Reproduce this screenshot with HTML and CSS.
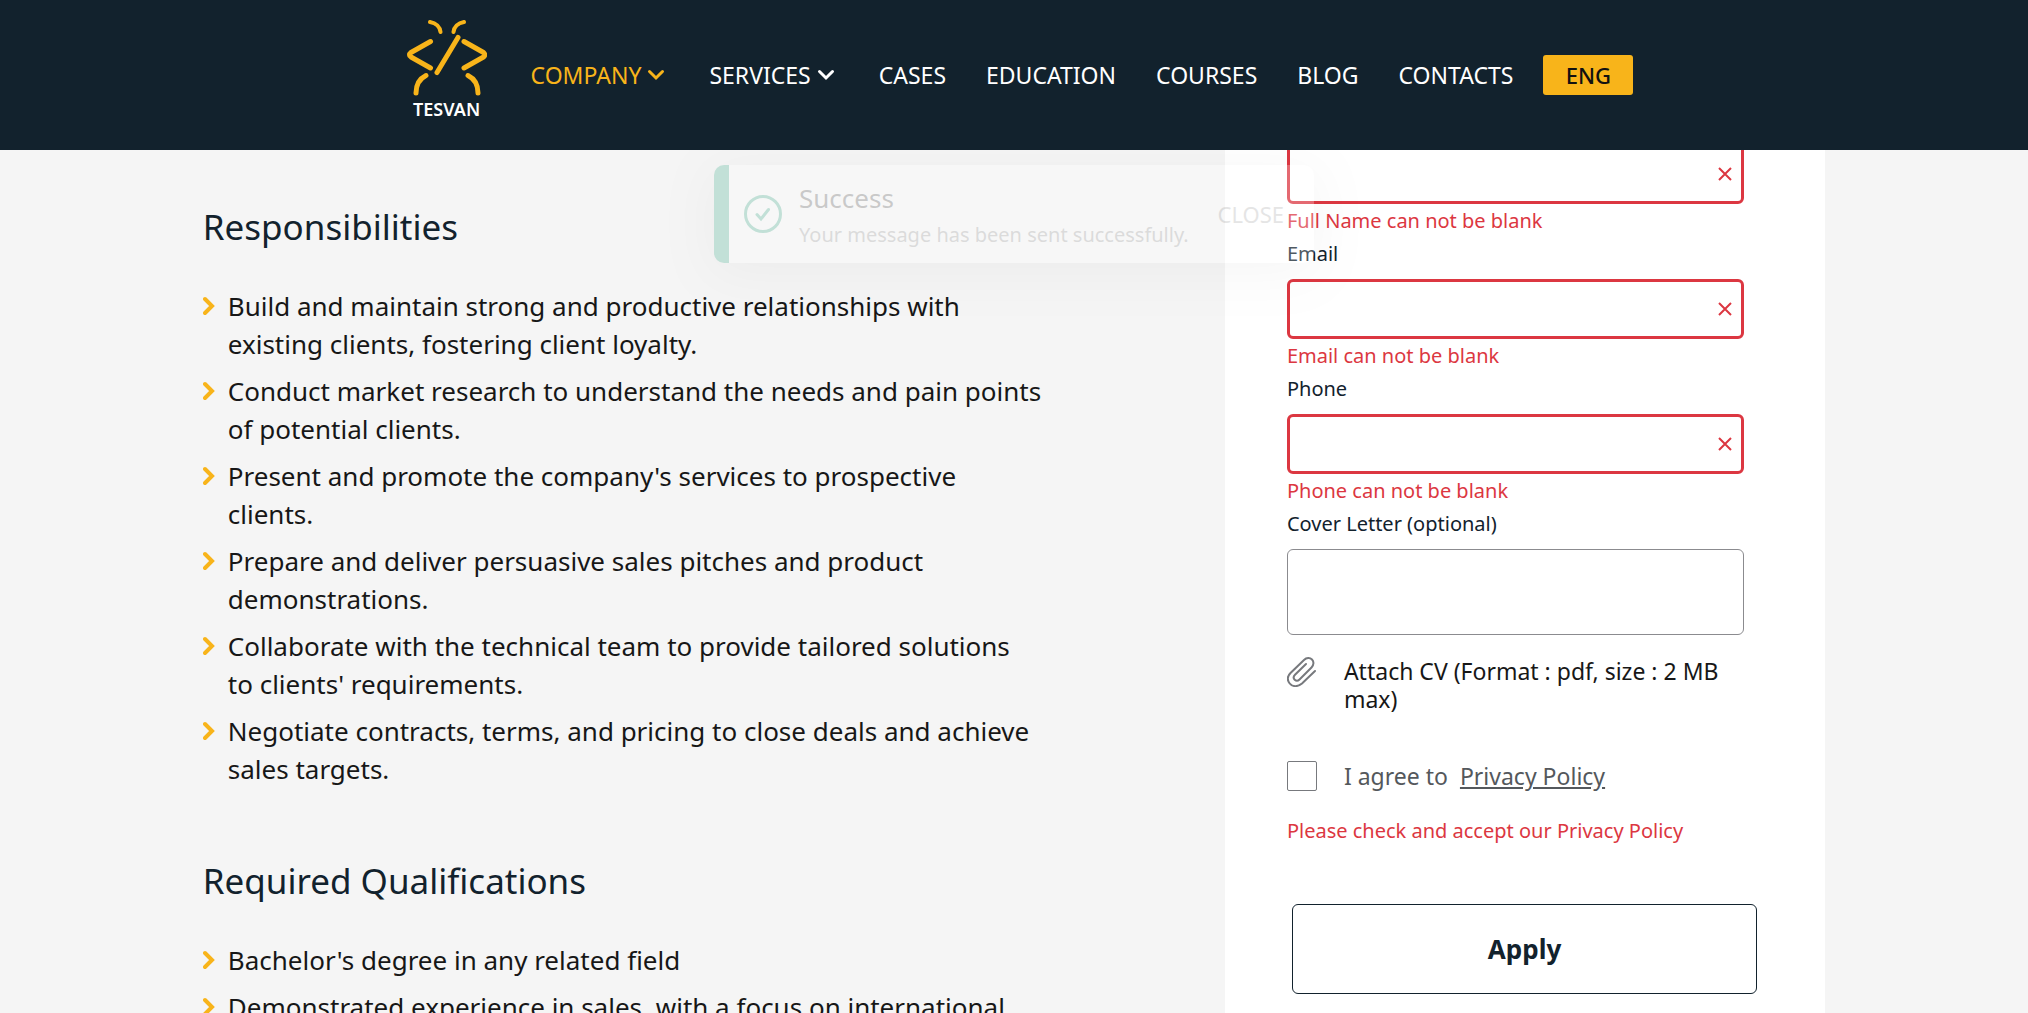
FILE: index.html
```html
<!DOCTYPE html>
<html lang="en">
<head>
<meta charset="utf-8">
<title>Tesvan – Careers</title>
<meta name="viewport" content="width=device-width, initial-scale=1">
<link rel="stylesheet" href="styles.css">
</head>
<body>
<header class="header">
  <a class="logo" href="#" aria-label="Tesvan home">
    <svg class="logo-mark" viewBox="0 0 80 76" fill="none" stroke="#f8b41a" stroke-width="5" stroke-linecap="round" stroke-linejoin="round" aria-hidden="true">
      <path d="M23 2C29 3 33 7 33.500 12M57 2C51 3 47 7 46.500 12" stroke-width="4"/>
      <path d="M23.500 21.500L4 32.500Q1 35 4 37L23.500 48M57 21.500L76.500 32.500Q79 35 76.500 37L57 48M51 17.500L30 52.500M19 55.500C12 59 9 66 9 73M61 55.500C68 59 71 66 71 73"/>
    </svg>
    <span class="logo-name">TESVAN</span>
  </a>
  <nav class="nav">
    <a class="nav-link active" href="#">COMPANY<svg class="chevron" viewBox="0 0 18 12" aria-hidden="true"><path d="M2.500 2.500L9 9L15.500 2.500"/></svg></a>
    <a class="nav-link" href="#">SERVICES<svg class="chevron" viewBox="0 0 18 12" aria-hidden="true"><path d="M2.500 2.500L9 9L15.500 2.500"/></svg></a>
    <a class="nav-link" href="#">CASES</a>
    <a class="nav-link" href="#">EDUCATION</a>
    <a class="nav-link" href="#">COURSES</a>
    <a class="nav-link" href="#">BLOG</a>
    <a class="nav-link" href="#">CONTACTS</a>
  </nav>
  <button class="lang" type="button">ENG</button>
</header>

<main class="main">
  <article class="job">
    <section class="section">
      <h2 class="section-title">Responsibilities</h2>
      <ul class="list">
        <li>Build and maintain strong and productive relationships with existing clients, fostering client loyalty.</li>
        <li>Conduct market research to understand the needs and pain points of potential clients.</li>
        <li>Present and promote the company's services to prospective clients.</li>
        <li>Prepare and deliver persuasive sales pitches and product demonstrations.</li>
        <li>Collaborate with the technical team to provide tailored solutions to&nbsp;clients' requirements.</li>
        <li>Negotiate contracts, terms, and pricing to close deals and achieve sales targets.</li>
      </ul>
    </section>
    <section class="section">
      <h2 class="section-title">Required Qualifications</h2>
      <ul class="list">
        <li>Bachelor's degree in any related field</li>
        <li>Demonstrated experience in sales, with a focus on international</li>
      </ul>
    </section>
  </article>

  <form class="card" novalidate>
    <div class="field field-first">
      <div class="control"><input class="input" type="text" aria-label="Full Name"><svg class="cross" viewBox="0 0 14 14" aria-hidden="true"><path d="M1 1L13 13M13 1L1 13"/></svg></div>
      <p class="error">Full Name can not be blank</p>
    </div>
    <div class="field">
      <label class="label" for="email">Email</label>
      <div class="control"><input class="input" id="email" type="email"><svg class="cross" viewBox="0 0 14 14" aria-hidden="true"><path d="M1 1L13 13M13 1L1 13"/></svg></div>
      <p class="error">Email can not be blank</p>
    </div>
    <div class="field">
      <label class="label" for="phone">Phone</label>
      <div class="control"><input class="input" id="phone" type="tel"><svg class="cross" viewBox="0 0 14 14" aria-hidden="true"><path d="M1 1L13 13M13 1L1 13"/></svg></div>
      <p class="error">Phone can not be blank</p>
    </div>
    <div class="field">
      <label class="label" for="letter">Cover Letter (optional)</label>
      <textarea class="textarea" id="letter"></textarea>
    </div>
    <button class="attach" type="button">
      <svg class="clip" viewBox="0 0 30 30" aria-hidden="true"><path d="M28 14L15 26.500C11 30 5.500 30 2.700 26.500C0 23 .5 19 3.500 16L17 3C19.500 .5 23 .5 25 2.500C27 4.500 27 8 24.500 10.500L12.500 22.500C11 24 9 24 7.700 22.700C6.300 21.300 6.500 19.300 8 17.800L19 7"/></svg>
      <span>Attach CV (Format : pdf, size : 2 MB max)</span>
    </button>
    <div class="agree">
      <input class="checkbox" type="checkbox" id="agree">
      <label for="agree">I agree to</label>
      <a class="policy" href="#">Privacy Policy</a>
    </div>
    <p class="error agree-error">Please check and accept our Privacy Policy</p>
    <button class="apply" type="button">Apply</button>
  </form>

  <div class="toast" role="status">
    <svg class="toast-icon" viewBox="0 0 38 38" aria-hidden="true"><circle cx="19" cy="19" r="17.500"/><path d="M13 19.500L17 24L24.500 14.500"/></svg>
    <div class="toast-body">
      <p class="toast-title">Success</p>
      <p class="toast-text">Your message has been sent successfully.</p>
    </div>
    <button class="toast-close" type="button">CLOSE</button>
  </div>
</main>
</body>
</html>
```
FILE: styles.css
```css
* {
  box-sizing: border-box;
}

body {
  margin: 0;
  height: 100vh;
  display: flex;
  flex-direction: column;
  overflow: hidden;
  background: #f5f5f5;
  color: #171717;
  font-family: "Noto Sans", "Open Sans", sans-serif;
}

h2, p, ul {
  margin: 0;
  padding: 0;
}

button, input, textarea {
  font-family: inherit;
}

/* Header */
.header {
  flex: none;
  height: 150px;
  padding-left: 12px;
  display: flex;
  align-items: center;
  justify-content: center;
  background: #12222d;
}

.logo {
  display: flex;
  flex-direction: column;
  align-items: center;
  align-self: flex-start;
  margin-right: 44px;
  padding-top: 20px;
  color: #fff;
  text-decoration: none;
}

.logo-mark {
  width: 80px;
  height: 76px;
}

.logo-name {
  font-size: 18px;
  font-weight: 600;
  line-height: 26px;
}

.nav {
  display: flex;
  gap: 40px;
}

.nav-link {
  display: flex;
  align-items: center;
  gap: 6px;
  color: #fff;
  font-size: 23px;
  line-height: 32px;
  text-decoration: none;
}

.nav-link.active {
  color: #f8b41a;
}

.chevron {
  width: 18px;
  height: 12px;
  margin-right: 4px;
  fill: none;
  stroke: currentColor;
  stroke-width: 3;
  stroke-linecap: round;
}

.lang {
  width: 90px;
  height: 40px;
  margin-left: 30px;
  border: 0;
  border-radius: 3px;
  background: #f8b41a;
  color: #111;
  font-size: 22px;
  font-weight: 500;
}

/* Page content */
.main {
  position: relative;
  flex: 1;
  min-height: 0;
  overflow: hidden;
  padding: 0 10%;
  display: flex;
  align-items: flex-start;
  justify-content: space-between;
}

.job {
  width: 52%;
  padding-top: 53px;
}

.section {
  margin-bottom: 69px;
}

.section-title {
  margin-bottom: 36px;
  color: #12222d;
  font-size: 35px;
  font-weight: 400;
  line-height: 48px;
}

.list {
  display: flex;
  flex-direction: column;
  gap: 9px;
  list-style: none;
}

.list li {
  padding-left: 25px;
  background: url("data:image/svg+xml,%3Csvg xmlns='http://www.w3.org/2000/svg' width='12' height='20'%3E%3Cpath d='M2 3L9 10L2 17' fill='none' stroke='%23f8b41a' stroke-width='4' stroke-linecap='round'/%3E%3C/svg%3E") no-repeat 0 9px;
  font-size: 26px;
  line-height: 38px;
}

/* Application form */
.card {
  width: 37%;
  min-height: 100%;
  padding: 0 81px 18px 62px;
  background: #fff;
}

.field-first {
  margin-top: -6px;
}

.label {
  display: block;
  margin-bottom: 9px;
  color: #12222d;
  font-size: 20px;
  line-height: 33px;
}

.control {
  position: relative;
}

.input {
  display: block;
  width: 100%;
  height: 60px;
  padding: 0 40px 0 16px;
  border: 3px solid #dc3741;
  border-radius: 6px;
  background: #fff;
  font-size: 20px;
}

.cross {
  position: absolute;
  top: 23px;
  right: 12px;
  width: 14px;
  height: 14px;
  stroke: #dc3741;
  stroke-width: 2;
}

.error {
  color: #dc3741;
  font-size: 20px;
  line-height: 33px;
}

.textarea {
  display: block;
  width: 100%;
  height: 86px;
  border: 1px solid #8b8b8f;
  border-radius: 6px;
  background: #fff;
  resize: none;
}

.attach {
  display: flex;
  align-items: flex-start;
  gap: 27px;
  margin-top: 22px;
  padding: 0;
  border: 0;
  background: none;
  color: #171717;
  font-size: 23px;
  line-height: 28px;
  text-align: left;
}

.clip {
  flex: none;
  width: 30px;
  height: 30px;
  fill: none;
  stroke: #77797d;
  stroke-width: 2;
  stroke-linecap: round;
}

.agree {
  display: flex;
  align-items: center;
  margin-top: 48px;
  color: #54585c;
  font-size: 23px;
  line-height: 30px;
}

.checkbox {
  appearance: none;
  width: 30px;
  height: 30px;
  margin: 0 27px 0 0;
  border: 1px solid #77797d;
  border-radius: 2px;
  background: #fff;
}

.policy {
  margin-left: 12px;
  color: inherit;
}

.agree-error {
  margin-top: 23px;
}

.apply {
  display: block;
  width: calc(100% + 8px);
  height: 90px;
  margin: 57px 0 0 5px;
  border: 1px solid #12222d;
  border-radius: 6px;
  background: #fff;
  color: #12222d;
  font-size: 26px;
  font-weight: 700;
}

/* Notification, fading out over the page */
.toast {
  position: absolute;
  top: 15px;
  left: 50%;
  width: 600px;
  height: 98px;
  margin-left: -300px;
  padding: 0 30px 0 15px;
  display: flex;
  align-items: center;
  border-left: 15px solid #30a480;
  border-radius: 10px;
  background: #fff;
  box-shadow: 0 8px 50px rgba(0, 0, 0, .14);
  opacity: .25;
}

.toast-icon {
  flex: none;
  width: 38px;
  height: 38px;
  margin-right: 17px;
  fill: none;
  stroke: #30a480;
  stroke-width: 3;
  stroke-linecap: round;
}

.toast-body {
  flex: 1;
  padding-top: 4px;
  white-space: nowrap;
}

.toast-title {
  color: #484848;
  font-size: 26px;
  line-height: 38px;
}

.toast-text {
  color: #909090;
  font-size: 20px;
  line-height: 36px;
}

.toast-close {
  padding: 0;
  border: 0;
  background: none;
  color: #999;
  font-size: 22px;
}
```
